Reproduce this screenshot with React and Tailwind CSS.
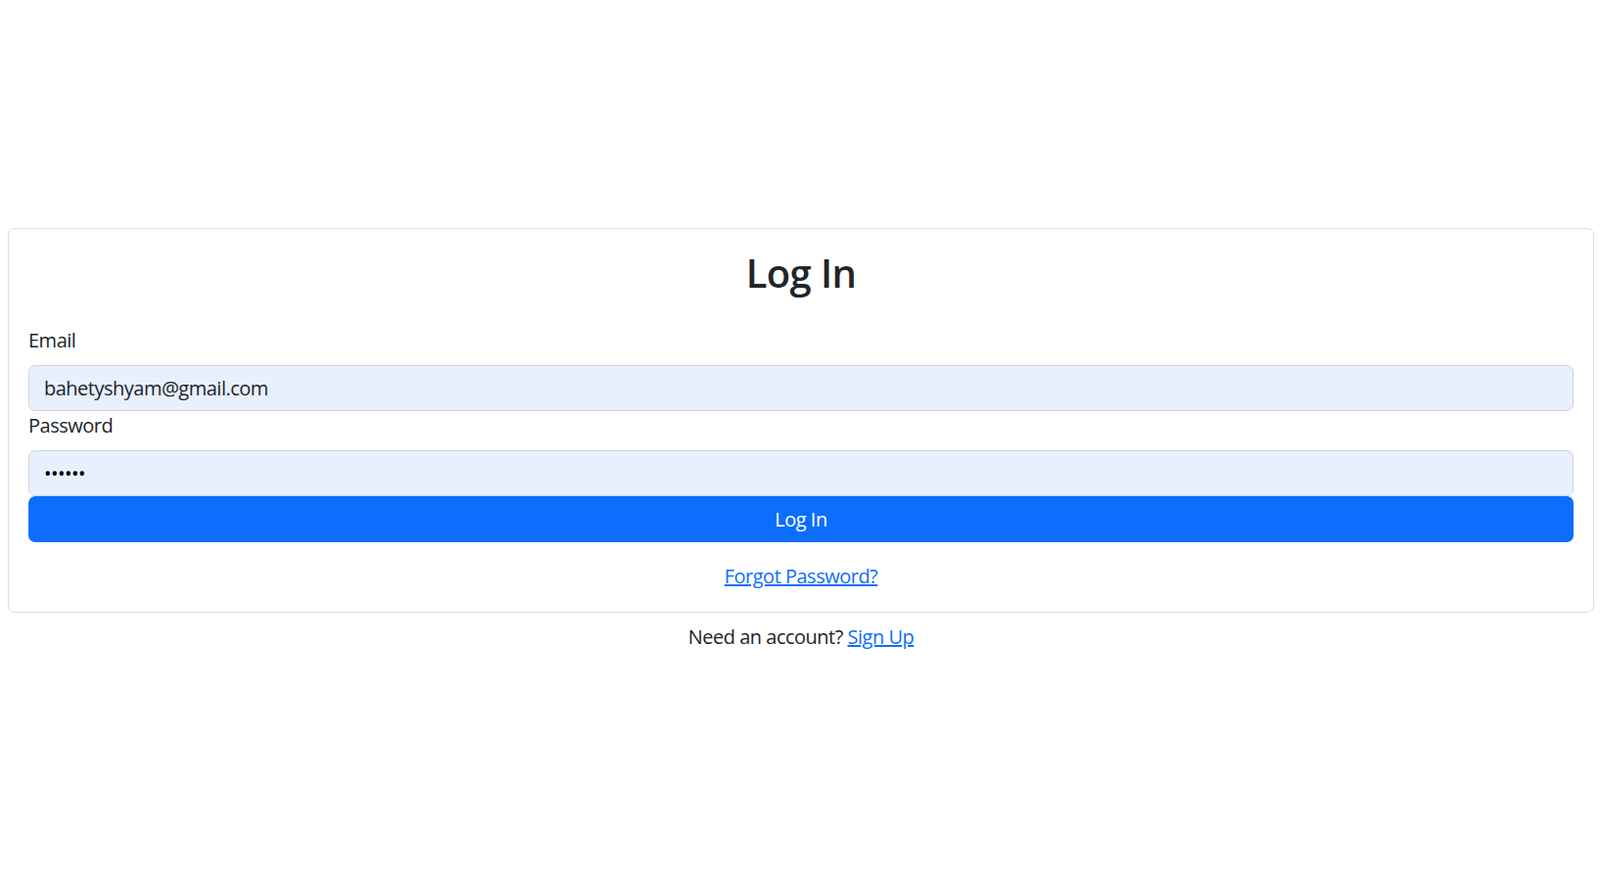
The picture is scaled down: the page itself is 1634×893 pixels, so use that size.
import React from "react";

export default function App() {
  return (
    <div
      className="min-h-screen bg-white pl-2 pr-[6px] pt-[233px] tracking-[-0.5px] text-[#212529]"
      style={{ fontFamily: '"Open Sans", "Noto Sans", "Liberation Sans", sans-serif' }}
    >
      <div className="rounded-[7px] border border-[#dfdfdf] bg-white p-5">
        <h2 className="mb-[30px] pt-px text-center text-[40px] font-semibold leading-[48px] tracking-[-0.6px]">Log In</h2>
        <form onSubmit={(e) => e.preventDefault()}>
          <label className="mb-[10px] block text-[20px] leading-[30px]">Email</label>
          <input
            type="email"
            readOnly
            defaultValue="bahetyshyam@gmail.com"
            className="block h-[47px] w-full rounded-[7px] border border-[#ced4da] bg-[#e8f0fe] px-[15px] text-[20px] leading-[30px] tracking-[-0.5px] text-[#212529] outline-none"
          />
          <label className="mb-[10px] block text-[20px] leading-[30px]">Password</label>
          <input
            type="password"
            readOnly
            defaultValue="123456"
            className="block h-[47px] w-full rounded-[7px] border border-[#ced4da] bg-[#e8f0fe] px-[15px] text-[20px] leading-[30px] text-black outline-none"
          />
          <button
            type="submit"
            className="block h-[47px] w-full rounded-[7px] bg-[#0d6efd] text-[20px] leading-[30px] tracking-[-0.5px] text-white"
          >
            Log In
          </button>
        </form>
        <div className="mt-5 pb-px text-center text-[20px] leading-[30px]">
          <a href="#" className="text-[#0d6efd] underline">Forgot Password?</a>
        </div>
      </div>
      <div className="mt-[10px] text-center text-[20px] leading-[30px]">
        Need an account? <a href="#" className="text-[#0d6efd] underline">Sign Up</a>
      </div>
    </div>
  );
}
